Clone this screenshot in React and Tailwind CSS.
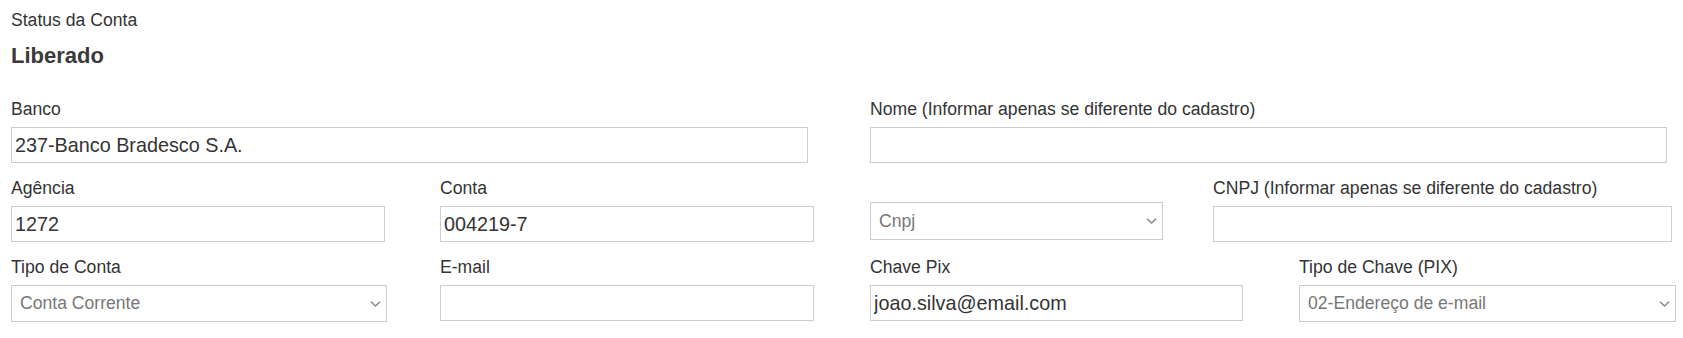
import React from 'react';

function Label({ children }) {
  return <div className="h-[20px] whitespace-nowrap text-[17.6px] leading-[20px] text-[#333]">{children}</div>;
}

function TextField({ label, value = '', className }) {
  return (
    <div className={className}>
      <Label>{label}</Label>
      <input
        readOnly
        defaultValue={value}
        className="mt-[8px] block h-[36px] w-full border border-[#cccccc] bg-white px-[3px] text-[19.8px] text-[#333] outline-none"
      />
    </div>
  );
}

function Chevron() {
  return (
    <svg
      className="pointer-events-none absolute right-[6px] top-1/2 -translate-y-1/2"
      width="11"
      height="7"
      viewBox="0 0 11 7"
      fill="none"
    >
      <path d="M1 1.2l4.5 4.3L10 1.2" stroke="#888" strokeWidth="1.5" />
    </svg>
  );
}

function SelectBox({ value, className }) {
  return (
    <div className={'relative ' + (className || '')}>
      <select
        defaultValue={value}
        className="block h-full w-full appearance-none border border-[#cccccc] bg-white pl-[8px] text-[17.6px] text-[#777] outline-none"
      >
        <option value={value}>{value}</option>
      </select>
      <Chevron />
    </div>
  );
}

function SelectField({ label, value, className }) {
  return (
    <div className={className}>
      <Label>{label}</Label>
      <SelectBox value={value} className="mt-[8px] h-[37px]" />
    </div>
  );
}

export default function App() {
  return (
    <div className="h-[338px] w-[1683px] overflow-hidden bg-white pl-[11px] pt-[10px] font-['Liberation_Sans',Arial,sans-serif] text-[#333]">
      <div className="text-[17.6px] leading-[20px]">Status da Conta</div>
      <div className="mt-[13px] text-[22px] font-bold leading-[26px] text-[#3a3a3a]">Liberado</div>

      <div className="mt-[30px] flex">
        <TextField className="w-[797px]" label="Banco" value="237-Banco Bradesco S.A." />
        <TextField className="ml-[62px] w-[797px]" label="Nome (Informar apenas se diferente do cadastro)" />
      </div>

      <div className="mt-[15px] flex items-start">
        <TextField className="w-[374px]" label="Agência" value="1272" />
        <TextField className="ml-[55px] w-[374px]" label="Conta" value="004219-7" />
        <SelectBox className="ml-[56px] mt-[24px] h-[38px] w-[293px]" value="Cnpj" />
        <TextField className="ml-[50px] w-[459px]" label="CNPJ (Informar apenas se diferente do cadastro)" />
      </div>

      <div className="mt-[15px] flex items-start">
        <SelectField className="w-[376px]" label="Tipo de Conta" value="Conta Corrente" />
        <TextField className="ml-[53px] w-[374px]" label="E-mail" />
        <TextField className="ml-[56px] w-[373px]" label="Chave Pix" value="joao.silva@email.com" />
        <SelectField className="ml-[56px] w-[377px]" label="Tipo de Chave (PIX)" value="02-Endereço de e-mail" />
      </div>
    </div>
  );
}
